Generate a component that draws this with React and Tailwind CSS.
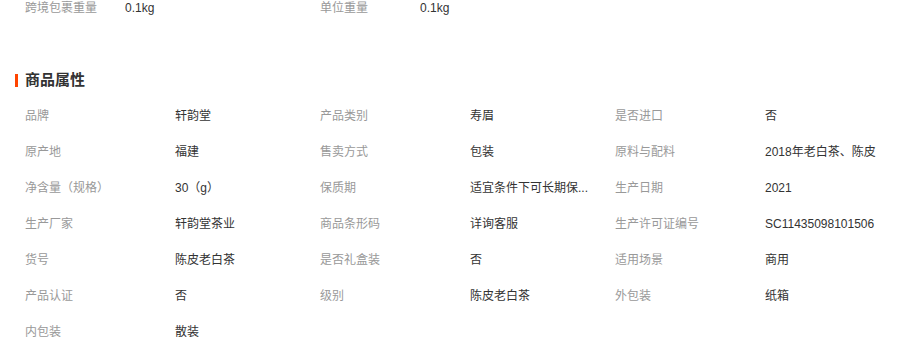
import React from "react";

const rows = [
  ["品牌", "轩韵堂", "产品类别", "寿眉", "是否进口", "否"],
  ["原产地", "福建", "售卖方式", "包装", "原料与配料", "2018年老白茶、陈皮"],
  ["净含量（规格）", "30（g）", "保质期", "适宜条件下可长期保...", "生产日期", "2021"],
  ["生产厂家", "轩韵堂茶业", "商品条形码", "详询客服", "生产许可证编号", "SC11435098101506"],
  ["货号", "陈皮老白茶", "是否礼盒装", "否", "适用场景", "商用"],
  ["产品认证", "否", "级别", "陈皮老白茶", "外包装", "纸箱"],
  ["内包装", "散装"],
];

export default function App() {
  return (
    <div
      className="w-[912px] h-[347px] bg-white overflow-hidden text-[12px]"
      style={{ fontFamily: '"Liberation Sans", "Noto Sans CJK SC", sans-serif' }}
    >
      <div className="flex pl-[25px] h-[16px] leading-[16px]">
        <div className="w-[100px] text-[#999]">跨境包裹重量</div>
        <div className="w-[195px] text-[#333]">0.1kg</div>
        <div className="w-[100px] text-[#999]">单位重量</div>
        <div className="w-[195px] text-[#333]">0.1kg</div>
      </div>
      <div className="mt-[54px] flex items-center pl-[15px] h-[20px]">
        <div className="w-[3px] h-[13px] bg-[#ff4400]" />
        <div className="ml-[7px] text-[15px] font-bold text-[#333] leading-[20px]">商品属性</div>
      </div>
      <div className="mt-[8px] pl-[25px]">
        {rows.map((r, i) => (
          <div key={i} className="flex h-[36px] items-center leading-[16px]">
            {[0, 2, 4].map((j) =>
              r[j] ? (
                <React.Fragment key={j}>
                  <div className="w-[150px] text-[#999] whitespace-nowrap">{r[j]}</div>
                  <div className="w-[145px] text-[#333] whitespace-nowrap">{r[j + 1]}</div>
                </React.Fragment>
              ) : null
            )}
          </div>
        ))}
      </div>
    </div>
  );
}
